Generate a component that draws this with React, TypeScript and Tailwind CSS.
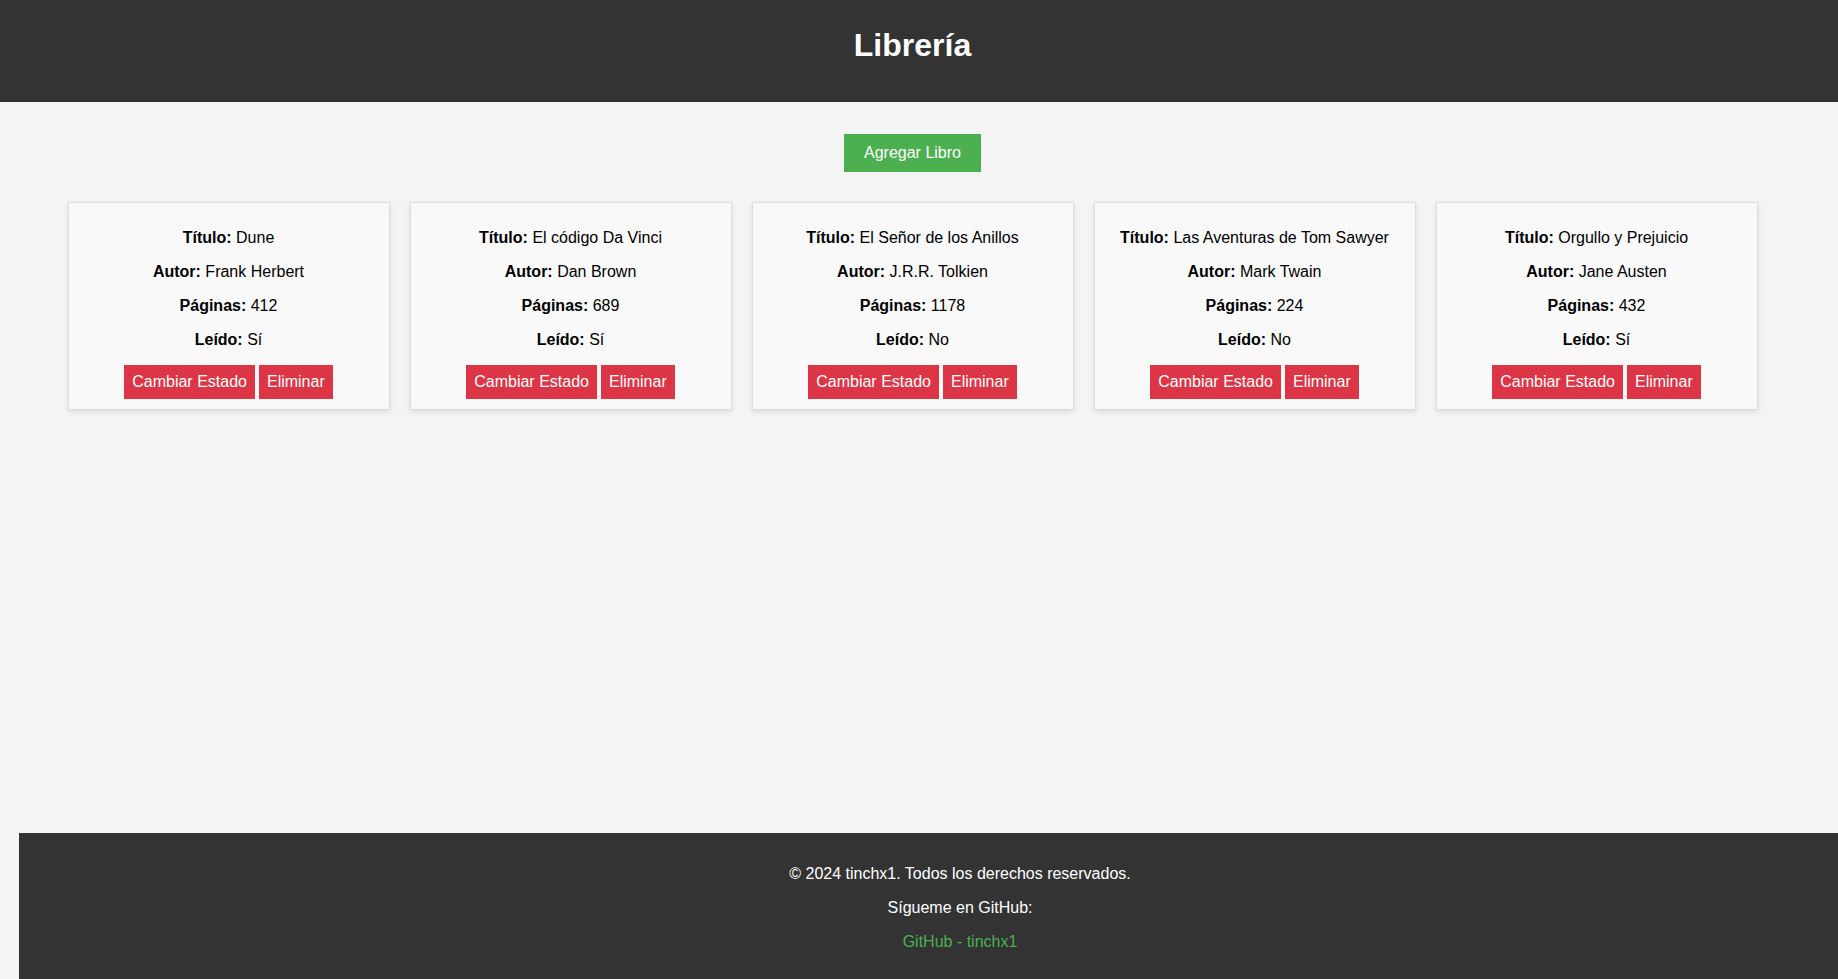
import { FunctionComponent } from 'react';

interface Book {
  titulo: string;
  autor: string;
  paginas: number;
  leido: boolean;
}

const books: Book[] = [
  { titulo: 'Dune', autor: 'Frank Herbert', paginas: 412, leido: true },
  { titulo: 'El código Da Vinci', autor: 'Dan Brown', paginas: 689, leido: true },
  { titulo: 'El Señor de los Anillos', autor: 'J.R.R. Tolkien', paginas: 1178, leido: false },
  { titulo: 'Las Aventuras de Tom Sawyer', autor: 'Mark Twain', paginas: 224, leido: false },
  { titulo: 'Orgullo y Prejuicio', autor: 'Jane Austen', paginas: 432, leido: true },
];

const BookCard: FunctionComponent<{ book: Book }> = ({ book }): JSX.Element => {
  return (
    <div className="w-[322px] border border-[#ddd] bg-[#f9f9f9] p-[10px] text-center shadow-[0_2px_5px_rgba(0,0,0,0.1)]">
      <p className="my-4 leading-[18px]">
        <strong>Título:</strong> {book.titulo}
      </p>
      <p className="my-4 leading-[18px]">
        <strong>Autor:</strong> {book.autor}
      </p>
      <p className="my-4 leading-[18px]">
        <strong>Páginas:</strong> {book.paginas}
      </p>
      <p className="my-4 leading-[18px]">
        <strong>Leído:</strong> {book.leido ? 'Sí' : 'No'}
      </p>
      <div className="flex justify-center gap-1">
        <button className="bg-[#dc3545] px-2 py-2 leading-[18px] text-white">
          Cambiar Estado
        </button>
        <button className="bg-[#dc3545] px-2 py-2 leading-[18px] text-white">
          Eliminar
        </button>
      </div>
    </div>
  );
};

export default function App() {
  return (
    <div className="flex min-h-[979px] flex-col overflow-hidden bg-[#f4f4f4] font-['Liberation_Sans',Arial,sans-serif] text-base text-black">
      <header className="h-[102px] bg-[#333] text-white">
        <div className="w-[1825px] pt-[27px] text-center">
          <h1 className="text-[32px] font-bold leading-[37px]">Librería</h1>
        </div>
      </header>

      <main className="flex w-[1825px] flex-col items-center pt-8">
        <button className="bg-[#4caf50] px-5 py-[10px] leading-[18px] text-white">
          Agregar Libro
        </button>
        <div className="mt-[30px] flex justify-center gap-5">
          {books.map((book, i) => (
            <BookCard key={i} book={book} />
          ))}
        </div>
      </main>

      <footer className="mt-auto ml-[19px] bg-[#333] pb-3 pt-4 pl-[63px] text-center text-white">
        <p className="my-4 leading-[18px]">© 2024 tinchx1. Todos los derechos reservados.</p>
        <p className="my-4 leading-[18px]">Sígueme en GitHub:</p>
        <p className="my-4 leading-[18px]">
          <a href="#" className="text-[#4caf50]">
            GitHub - tinchx1
          </a>
        </p>
      </footer>
    </div>
  );
}
